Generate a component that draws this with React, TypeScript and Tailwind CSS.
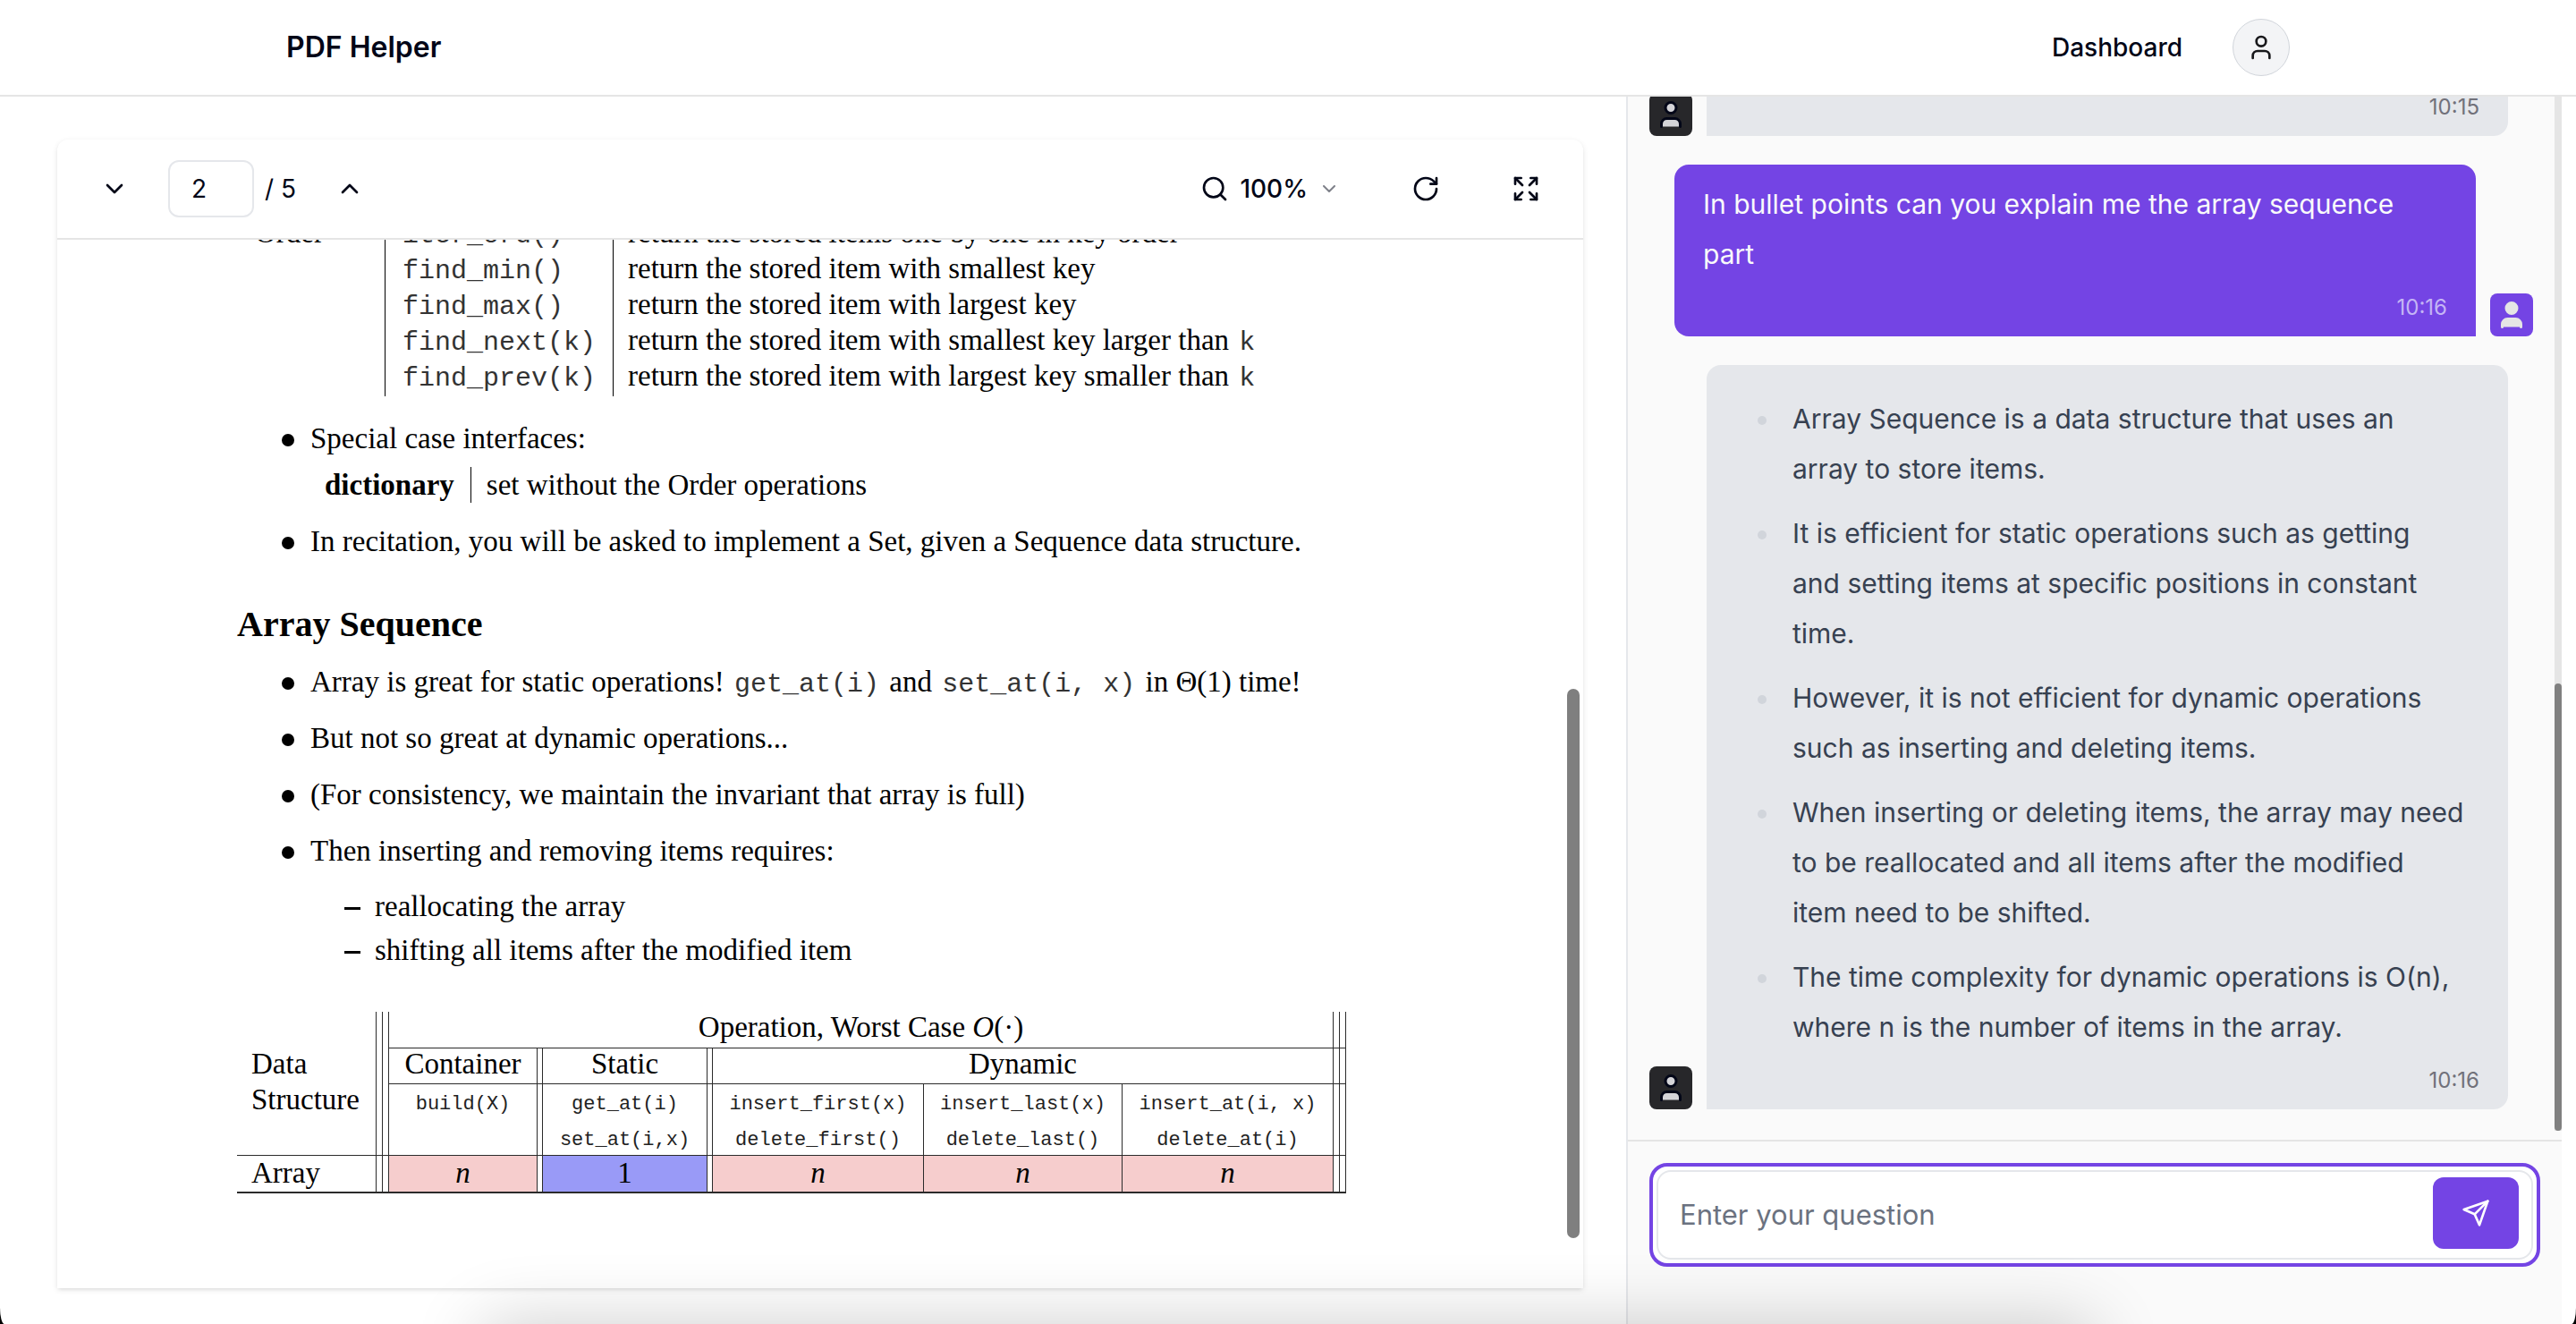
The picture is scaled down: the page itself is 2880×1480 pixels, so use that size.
import type { ReactNode } from 'react';
import { ChevronDown, ChevronUp, Expand, RotateCw, Search, User } from 'lucide-react';

const serif = "font-['Liberation_Serif',serif]";
const mono = "font-['Liberation_Mono',monospace]";

function Code({ children }: { children: ReactNode }) {
  return <code className={`${mono} mx-[3px] text-[30px] leading-none text-[#333333]`}>{children}</code>;
}

function Header() {
  return (
    <header className="h-27 shrink-0 border-b-2 border-[#e5e5e5] bg-white">
      <div className="mx-auto flex h-full max-w-[2240px] items-center justify-between">
        <a href="#home" className="text-[32px] leading-10 font-semibold">
          PDF Helper
        </a>
        <nav className="flex items-center gap-14">
          <a href="#dashboard" className="text-[28px] leading-10 font-medium">
            Dashboard
          </a>
          <button
            type="button"
            aria-label="Account"
            className="flex size-16 items-center justify-center rounded-full border border-[#d1d5db] bg-[#f3f4f6] text-[#18181b]"
          >
            <User size={32} />
          </button>
        </nav>
      </div>
    </header>
  );
}

function ToolButton({ label, children }: { label: string; children: ReactNode }) {
  return (
    <button
      type="button"
      aria-label={label}
      className="flex h-20 items-center gap-3 px-8 text-[28px] leading-10 font-medium"
    >
      {children}
    </button>
  );
}

function Toolbar() {
  return (
    <div className="flex h-28 shrink-0 items-center justify-between border-b-2 border-[#e5e5e5] px-4">
      <div className="flex items-center gap-3">
        <ToolButton label="Next page">
          <ChevronDown size={32} />
        </ToolButton>
        <input
          aria-label="Page"
          defaultValue="2"
          className="h-16 w-24 rounded-xl border-2 border-[#e5e7eb] px-6 text-[28px] leading-10 outline-none"
        />
        <p className="text-[28px] leading-10">/ 5</p>
        <ToolButton label="Previous page">
          <ChevronUp size={32} />
        </ToolButton>
      </div>
      <div className="flex items-center gap-4">
        <ToolButton label="Zoom">
          <Search size={32} />
          100%
          <ChevronDown size={24} className="opacity-50" />
        </ToolButton>
        <ToolButton label="Rotate">
          <RotateCw size={32} />
        </ToolButton>
        <ToolButton label="Full screen">
          <Expand size={32} />
        </ToolButton>
      </div>
    </div>
  );
}

const orderOperations: { call: string; text: string; arg?: string }[] = [
  { call: 'iter_ord()', text: 'return the stored items one by one in key order' },
  { call: 'find_min()', text: 'return the stored item with smallest key' },
  { call: 'find_max()', text: 'return the stored item with largest key' },
  { call: 'find_next(k)', text: 'return the stored item with smallest key larger than', arg: 'k' },
  { call: 'find_prev(k)', text: 'return the stored item with largest key smaller than', arg: 'k' },
];

function OrderTable() {
  return (
    <table className="w-max border-separate border-spacing-0 text-left">
      <tbody>
        {orderOperations.map((row, i) => (
          <tr key={row.call} className="align-top last:h-[43px]">
            <th className="w-[165px] pl-5 font-normal">{i === 0 ? 'Order' : ''}</th>
            <td className="w-[255px] border-l border-black pl-4">
              <Code>{row.call}</Code>
            </td>
            <td className="border-l border-black pl-4">
              {row.text} {row.arg && <Code>{row.arg}</Code>}
            </td>
          </tr>
        ))}
      </tbody>
    </table>
  );
}

function Bullet({ children }: { children: ReactNode }) {
  return (
    <li className="flex items-center">
      <span className="mt-1 mr-[18px] ml-[50px] size-[14px] rounded-full bg-black" />
      <span className="whitespace-nowrap">{children}</span>
    </li>
  );
}

function Dash({ children }: { children: ReactNode }) {
  return (
    <li className="flex items-center">
      <span className="mt-1 mr-4 ml-30 h-[3px] w-[18px] bg-black" />
      <span>{children}</span>
    </li>
  );
}

const line = 'border-[#2b2b2b]';

function Bar({ className = '' }: { className?: string }) {
  return <td className={`border-l ${line} ${className}`} />;
}

function Calls({ first, second = '' }: { first: string; second?: string }) {
  return (
    <td className={`border-b border-l ${line} text-center align-top`}>
      <div className={`h-[79px] pt-[3px] ${mono} text-[22px] leading-10 text-[#222222]`}>
        <p>{first}</p>
        <p>{second}</p>
      </div>
    </td>
  );
}

function ComplexityTable() {
  const head = `border-l border-b ${line} align-top text-center leading-[34px] font-normal`;
  const cost = `border-l border-b-2 ${line} align-top text-center leading-[38px]`;
  return (
    <table className="mt-[49px] w-[1240px] table-fixed border-separate border-spacing-0">
      <colgroup>
        <col className="w-[155px]" />
        <col className="w-[7px]" />
        <col className="w-[7px]" />
        <col className="w-[166px]" />
        <col className="w-[6px]" />
        <col className="w-[184px]" />
        <col className="w-[6px]" />
        <col className="w-[236px]" />
        <col className="w-[222px]" />
        <col className="w-[236px]" />
        <col className="w-[7px]" />
        <col className="w-[8px]" />
      </colgroup>
      <tbody>
        <tr className="h-[41px]">
          <th rowSpan={3} className={`border-b ${line} pt-[38px] pl-4 text-left align-top leading-10 font-normal`}>
            Data
            <br />
            Structure
          </th>
          <Bar />
          <Bar />
          <th colSpan={7} className={head}>
            Operation, Worst Case <i>O</i>(·)
          </th>
          <Bar className="border-b" />
          <Bar className="border-r border-b" />
        </tr>
        <tr className="h-10">
          <Bar />
          <Bar />
          <th className={head}>Container</th>
          <Bar className="border-b" />
          <th className={head}>Static</th>
          <Bar className="border-b" />
          <th colSpan={3} className={head}>
            Dynamic
          </th>
          <Bar className="border-b" />
          <Bar className="border-r border-b" />
        </tr>
        <tr className="h-20">
          <Bar className="border-b" />
          <Bar className="border-b" />
          <Calls first="build(X)" />
          <Bar className="border-b" />
          <Calls first="get_at(i)" second="set_at(i,x)" />
          <Bar className="border-b" />
          <Calls first="insert_first(x)" second="delete_first()" />
          <Calls first="insert_last(x)" second="delete_last()" />
          <Calls first="insert_at(i, x)" second="delete_at(i)" />
          <Bar className="border-b" />
          <Bar className="border-r border-b" />
        </tr>
        <tr className="h-[42px]">
          <th className={`border-b-2 ${line} pl-4 text-left align-top leading-[38px] font-normal`}>Array</th>
          <Bar className="border-b-2" />
          <Bar className="border-b-2" />
          <td className={`${cost} bg-[#f6cdcd] italic`}>n</td>
          <Bar className="border-b-2" />
          <td className={`${cost} bg-[#999af7]`}>1</td>
          <Bar className="border-b-2" />
          <td className={`${cost} bg-[#f6cdcd] italic`}>n</td>
          <td className={`${cost} bg-[#f6cdcd] italic`}>n</td>
          <td className={`${cost} bg-[#f6cdcd] italic`}>n</td>
          <Bar className="border-b-2" />
          <Bar className="border-r border-b-2" />
        </tr>
      </tbody>
    </table>
  );
}

function PdfPage() {
  return (
    <article className={`${serif} pb-[106px] pl-[201px] text-[33px] leading-10 text-black`}>
      <OrderTable />
      <ul className="mt-[27px]">
        <Bullet>Special case interfaces:</Bullet>
        <li className="mt-3 mb-[23px] ml-[98px] flex">
          <b className="pr-[18px]">dictionary</b>
          <span className="border-l border-black pl-[17px]">set without the Order operations</span>
        </li>
        <Bullet>In recitation, you will be asked to implement a Set, given a Sequence data structure.</Bullet>
      </ul>
      <h2 className="mt-[49px] text-[40px] leading-12 font-bold">Array Sequence</h2>
      <ul className="mt-5 flex flex-col gap-[23px]">
        <Bullet>
          Array is great for static operations! <Code>get_at(i)</Code> and <Code>set_at(i, x)</Code> in Θ(1) time!
        </Bullet>
        <Bullet>But not so great at dynamic operations...</Bullet>
        <Bullet>(For consistency, we maintain the invariant that array is full)</Bullet>
        <Bullet>Then inserting and removing items requires:</Bullet>
      </ul>
      <ul className="mt-[22px] flex flex-col gap-[9px]">
        <Dash>reallocating the array</Dash>
        <Dash>shifting all items after the modified item</Dash>
      </ul>
      <ComplexityTable />
    </article>
  );
}

function PdfViewer() {
  return (
    <main className="flex min-h-0 min-w-0 flex-col pt-12 pr-12 pb-10 pl-16">
      <section className="flex min-h-0 flex-1 flex-col rounded-t-xl bg-white shadow-[0_2px_6px_rgba(0,0,0,0.1),0_2px_4px_-2px_rgba(0,0,0,0.1)]">
        <Toolbar />
        <div className="relative flex min-h-0 flex-1 flex-col justify-end overflow-hidden">
          <PdfPage />
          <span className="absolute right-1 bottom-14 h-[614px] w-[14px] rounded-full bg-[#7f7f7f]" />
        </div>
      </section>
    </main>
  );
}

function Avatar({ mine }: { mine: boolean }) {
  return (
    <span
      className={`flex size-12 shrink-0 items-center justify-center rounded-lg ${mine ? 'bg-[#7444e4]' : 'bg-[#27272a]'}`}
    >
      <User size={36} className={mine ? 'fill-[#e5e5e5] text-[#e5e5e5]' : 'fill-[#d4d4d8] text-[#020617]'} />
    </span>
  );
}

function Message({ mine = false, time, children }: { mine?: boolean; time: string; children?: ReactNode }) {
  return (
    <div className={`flex items-end gap-4 ${mine ? 'ml-7 flex-row-reverse' : 'mr-7'}`}>
      <Avatar mine={mine} />
      <div
        className={`flex min-h-24 flex-1 flex-col justify-end rounded-t-2xl px-8 py-4 text-[30px] leading-14 ${
          mine ? 'rounded-bl-2xl bg-[#7444e4] text-[#f9fafb]' : 'rounded-br-2xl bg-[#e5e7eb] text-[#374151]'
        }`}
      >
        {children}
        <p className={`mt-4 text-right text-2xl leading-8 ${mine ? 'text-[#c4b5f5]' : 'text-[#71717a]'}`}>{time}</p>
      </div>
    </div>
  );
}

const answer = [
  'Array Sequence is a data structure that uses an\narray to store items.',
  'It is efficient for static operations such as getting\nand setting items at specific positions in constant\ntime.',
  'However, it is not efficient for dynamic operations\nsuch as inserting and deleting items.',
  'When inserting or deleting items, the array may need\nto be reallocated and all items after the modified\nitem need to be shifted.',
  'The time complexity for dynamic operations is O(n),\nwhere n is the number of items in the array.',
];

function Chat() {
  return (
    <aside className="mr-4 flex min-h-0 min-w-0 flex-col border-l-2 border-[#e5e7eb] bg-[#fafafa]">
      <div className="relative flex min-h-0 flex-1 flex-col justify-end gap-8 overflow-hidden pr-8 pb-[34px] pl-6">
        <Message time="10:15" />
        <Message mine time="10:16">
          <p>In bullet points can you explain me the array sequence part</p>
        </Message>
        <Message time="10:16">
          <ul className="flex flex-col gap-4 pt-4">
            {answer.map((item) => (
              <li key={item} className="flex">
                <span className="mt-[25px] mr-[29px] ml-[25px] size-[10px] shrink-0 rounded-full bg-[#d1d5db]" />
                <span className="whitespace-pre-line">{item}</span>
              </li>
            ))}
          </ul>
        </Message>
        <span className="absolute top-0 right-0 bottom-[10px] flex w-2 flex-col justify-end bg-[#e5e5e5]">
          <span className="h-[500px] rounded-full bg-[#808080]" />
        </span>
      </div>
      <div className="border-t-2 border-[#e5e5e5] px-6 pt-6 pb-16">
        <form
          className="rounded-[20px] border-4 border-[#7444e4] bg-white p-1"
          onSubmit={(e) => e.preventDefault()}
        >
          <div className="flex h-25 rounded-2xl border-2 border-[#e5e7eb] pt-[6px] pr-[14px] pb-[10px] pl-6">
            <input
              aria-label="Enter your question"
              placeholder="Enter your question"
              className="min-w-0 flex-1 bg-transparent pt-1 text-[31px] leading-10 outline-none placeholder:text-[#6b7280]"
            />
            <button
              type="submit"
              aria-label="Send"
              className="flex h-20 w-24 items-center justify-center rounded-xl bg-[#7444e4] text-white"
            >
              <svg
                viewBox="0 0 24 24"
                className="size-8"
                fill="none"
                stroke="currentColor"
                strokeWidth="2"
                strokeLinecap="round"
                strokeLinejoin="round"
              >
                <path d="m22 2-7 20-4-9-9-4Z" />
                <path d="M22 2 11 13" />
              </svg>
            </button>
          </div>
        </form>
      </div>
    </aside>
  );
}

export default function App() {
  return (
    <div className="bg-black">
      <div className="relative flex h-screen flex-col overflow-hidden rounded-b-[5px_18px] bg-white font-[Inter,sans-serif] text-[#020617]">
        <Header />
        <div className="grid min-h-0 flex-1 grid-cols-[1818fr_1062fr]">
          <PdfViewer />
          <Chat />
        </div>
        <div className="pointer-events-none absolute inset-x-[540px] top-full h-40 shadow-[0_0_80px_rgba(0,0,0,0.2)]" />
      </div>
    </div>
  );
}
